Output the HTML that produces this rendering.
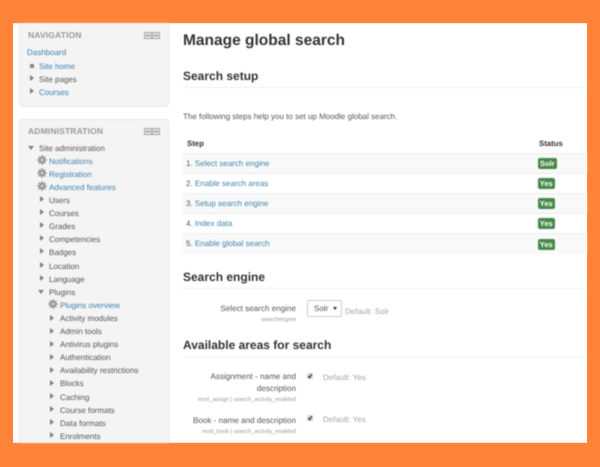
<!DOCTYPE html>
<html><head><meta charset="utf-8">
<style>
html,body{margin:0;padding:0;width:600px;height:467px;overflow:hidden;background:#fe8439}
body{position:relative;font-family:"Liberation Sans",sans-serif;text-rendering:geometricPrecision}
#w{position:absolute;left:13px;top:23px;width:574px;height:420px;background:#fff;overflow:hidden}
#f{position:absolute;left:0;top:0;width:600px;height:467px;filter:blur(.5px)}
.b{position:absolute;background:#f4f4f4;border:1px solid #e8e8e8;box-sizing:border-box;border-radius:3px}
.t{position:absolute;white-space:nowrap;font-size:8px;line-height:12px;color:#555;margin-top:1px}
.a{color:#3f82ad}
.h{position:absolute;white-space:nowrap;font-weight:bold;font-size:8.5px;line-height:12px;color:#999;letter-spacing:.15px;margin-top:1px}
.r{position:absolute;border-style:solid;border-color:transparent transparent transparent #808080;border-width:3.5px 0 3.5px 4px;width:0;height:0}
.d{position:absolute;border-style:solid;border-color:#808080 transparent transparent transparent;border-width:4px 3.5px 0 3.5px;width:0;height:0}
.g{position:absolute;width:10px;height:10px}
.hh{position:absolute;white-space:nowrap;font-weight:bold;color:#333;font-size:12px;line-height:16px}
.l{position:absolute;left:183px;width:404px;height:1px;background:#eee}
.row{position:absolute;left:183px;width:404px;height:20px;border-top:1px solid #ececec;box-sizing:border-box}
.bd{position:absolute;left:538px;height:11px;background:#468847;color:#fff;font-size:7.5px;font-weight:bold;line-height:11px;text-align:center;border-radius:2px}
.rt{position:absolute;right:304px;white-space:nowrap;font-size:8.1px;line-height:12px;color:#555;text-align:right;margin-top:1px}
.sm{position:absolute;right:304px;white-space:nowrap;font-size:5.8px;line-height:8px;color:#999;margin-top:1px}
.df{position:absolute;white-space:nowrap;font-size:8px;line-height:12px;color:#a3a3a3;margin-top:1px}
.cb{position:absolute;left:307px;width:6px;height:6px}
.ic{position:absolute;width:8px;height:7px;background:#e2e2e2;border:1px solid #aaa;box-sizing:border-box}
.ic:after{content:"";position:absolute;left:1px;top:2px;width:4px;height:1px;background:#888}
</style></head><body>
<div id="w"></div>
<div id="f">
<svg width="0" height="0" style="position:absolute"><defs><symbol id="gear" viewBox="0 0 10 10"><g stroke="#999" stroke-width="1.8"><path d="M5 .3V9.700M.3 5H9.700M1.700 1.700L8.300 8.300M8.300 1.700L1.700 8.300"/></g><circle cx="5" cy="5" r="3.400" fill="#999"/><circle cx="5" cy="5" r="1.200" fill="#e0e0e0"/></symbol><symbol id="chk" viewBox="0 0 6 6"><rect width="6" height="6" rx="1" fill="#d8d8d8"/><path d="M1.300 3.200L2.500 4.700L4.800 1.200" fill="none" stroke="#333" stroke-width="1.200"/></symbol></defs></svg>

<div class="b" style="left:19px;top:20px;width:150px;height:87px"></div>
<div class="h" style="left:28px;top:28px">NAVIGATION</div>
<div class="ic" style="left:144px;top:32px"></div><div class="ic" style="left:152px;top:32px"></div>
<div class="t a" style="left:27px;top:46px">Dashboard</div>
<div style="position:absolute;left:30px;top:64px;width:4px;height:4px;background:#888"></div>
<div class="t a" style="left:39px;top:60px">Site home</div>
<div class="r" style="left:30px;top:75px"></div>
<div class="t" style="left:39px;top:73px">Site pages</div>
<div class="r" style="left:30px;top:88px"></div>
<div class="t a" style="left:39px;top:86px">Courses</div>

<div class="b" style="left:19px;top:119px;width:150px;height:340px"></div>
<div class="h" style="left:28px;top:124px">ADMINISTRATION</div>
<div class="ic" style="left:144px;top:128px"></div><div class="ic" style="left:152px;top:128px"></div>
<div class="d" style="left:28px;top:146px"></div>
<div class="t" style="left:39px;top:142px">Site administration</div>

<svg class="g" style="left:37px;top:155px"><use href="#gear"/></svg><div class="t a" style="left:49px;top:155px">Notifications</div>
<svg class="g" style="left:37px;top:168px"><use href="#gear"/></svg><div class="t a" style="left:49px;top:168px">Registration</div>
<svg class="g" style="left:37px;top:181px"><use href="#gear"/></svg><div class="t a" style="left:49px;top:181px">Advanced features</div>

<div class="r" style="left:40px;top:196px"></div><div class="t" style="left:49px;top:194px">Users</div>
<div class="r" style="left:40px;top:209px"></div><div class="t" style="left:49px;top:207px">Courses</div>
<div class="r" style="left:40px;top:222px"></div><div class="t" style="left:49px;top:220px">Grades</div>
<div class="r" style="left:40px;top:235px"></div><div class="t" style="left:49px;top:233px">Competencies</div>
<div class="r" style="left:40px;top:248px"></div><div class="t" style="left:49px;top:246px">Badges</div>
<div class="r" style="left:40px;top:262px"></div><div class="t" style="left:49px;top:260px">Location</div>
<div class="r" style="left:40px;top:275px"></div><div class="t" style="left:49px;top:273px">Language</div>
<div class="d" style="left:38px;top:290px"></div><div class="t" style="left:49px;top:286px">Plugins</div>
<svg class="g" style="left:48px;top:299px"><use href="#gear"/></svg><div class="t a" style="left:60px;top:299px">Plugins overview</div>

<div class="r" style="left:50px;top:315px"></div><div class="t" style="left:60px;top:312px">Activity modules</div>
<div class="r" style="left:50px;top:328px"></div><div class="t" style="left:60px;top:325px">Admin tools</div>
<div class="r" style="left:50px;top:341px"></div><div class="t" style="left:60px;top:338px">Antivirus plugins</div>
<div class="r" style="left:50px;top:354px"></div><div class="t" style="left:60px;top:351px">Authentication</div>
<div class="r" style="left:50px;top:367px"></div><div class="t" style="left:60px;top:364px">Availability restrictions</div>
<div class="r" style="left:50px;top:380px"></div><div class="t" style="left:60px;top:377px">Blocks</div>
<div class="r" style="left:50px;top:393px"></div><div class="t" style="left:60px;top:391px">Caching</div>
<div class="r" style="left:50px;top:406px"></div><div class="t" style="left:60px;top:404px">Course formats</div>
<div class="r" style="left:50px;top:419px"></div><div class="t" style="left:60px;top:417px">Data formats</div>
<div class="r" style="left:50px;top:432px"></div><div class="t" style="left:60px;top:430px">Enrolments</div>

<div class="hh" style="left:183px;top:31px;font-size:15.500px;line-height:20px">Manage global search</div>
<div class="hh" style="left:183px;top:68px">Search setup</div>
<div class="l" style="top:87px"></div>
<div class="t" style="left:183px;top:110px">The following steps help you to set up Moodle global search.</div>
<div class="t" style="left:187px;top:137px;font-size:7.800px;font-weight:bold;color:#333">Step</div>
<div class="t" style="left:539px;top:137px;font-size:7.800px;font-weight:bold;color:#333">Status</div>

<div class="row" style="top:153px;background:#f9f9f9"></div>
<div class="row" style="top:173px"></div>
<div class="row" style="top:193px;background:#f9f9f9"></div>
<div class="row" style="top:213px"></div>
<div class="row" style="top:233px;background:#f9f9f9;height:21px"></div>

<div class="t" style="left:186px;top:157px">1. <span class="a">Select search engine</span></div>
<div class="t" style="left:186px;top:177px">2. <span class="a">Enable search areas</span></div>
<div class="t" style="left:186px;top:197px">3. <span class="a">Setup search engine</span></div>
<div class="t" style="left:186px;top:217px">4. <span class="a">Index data</span></div>
<div class="t" style="left:186px;top:237px">5. <span class="a">Enable global search</span></div>

<div class="bd" style="top:158px;width:18.500px">Solr</div>
<div class="bd" style="top:178px;width:16.500px">Yes</div>
<div class="bd" style="top:198px;width:16.500px">Yes</div>
<div class="bd" style="top:218px;width:16.500px">Yes</div>
<div class="bd" style="top:239px;width:16.500px">Yes</div>

<div class="hh" style="left:183px;top:269px">Search engine</div>
<div class="l" style="top:288px"></div>
<div class="rt" style="top:302px">Select search engine</div>
<div class="sm" style="top:315px">searchengine</div>
<div style="position:absolute;left:307px;top:300px;width:35px;height:17px;box-sizing:border-box;border:1px solid #ccc;border-radius:2px;background:#fff"></div>
<div class="t" style="left:314px;top:302px">Solr</div>
<div style="position:absolute;left:333px;top:307px;border-style:solid;border-color:#333 transparent transparent;border-width:3px 2px 0;width:0;height:0"></div>
<div class="df" style="left:345px;top:305px">Default: Solr</div>

<div class="hh" style="left:183px;top:337px">Available areas for search</div>
<div class="l" style="top:357px"></div>

<div class="rt" style="top:370px">Assignment - name and</div>
<div class="rt" style="top:382px">description</div>
<div class="sm" style="top:395px">mod_assign | search_activity_enabled</div>
<svg class="cb" style="top:373px"><use href="#chk"/></svg>
<div class="df" style="left:323px;top:371px">Default: Yes</div>

<div class="rt" style="top:414px">Book - name and description</div>
<div class="sm" style="top:427px">mod_book | search_activity_enabled</div>
<svg class="cb" style="top:415px"><use href="#chk"/></svg>
<div class="df" style="left:323px;top:413px">Default: Yes</div>

<div style="position:absolute;left:0;top:0;width:600px;height:23px;background:#fe8439"></div>
<div style="position:absolute;left:0;top:443px;width:600px;height:24px;background:#fe8439"></div>
</div>
</body></html>
